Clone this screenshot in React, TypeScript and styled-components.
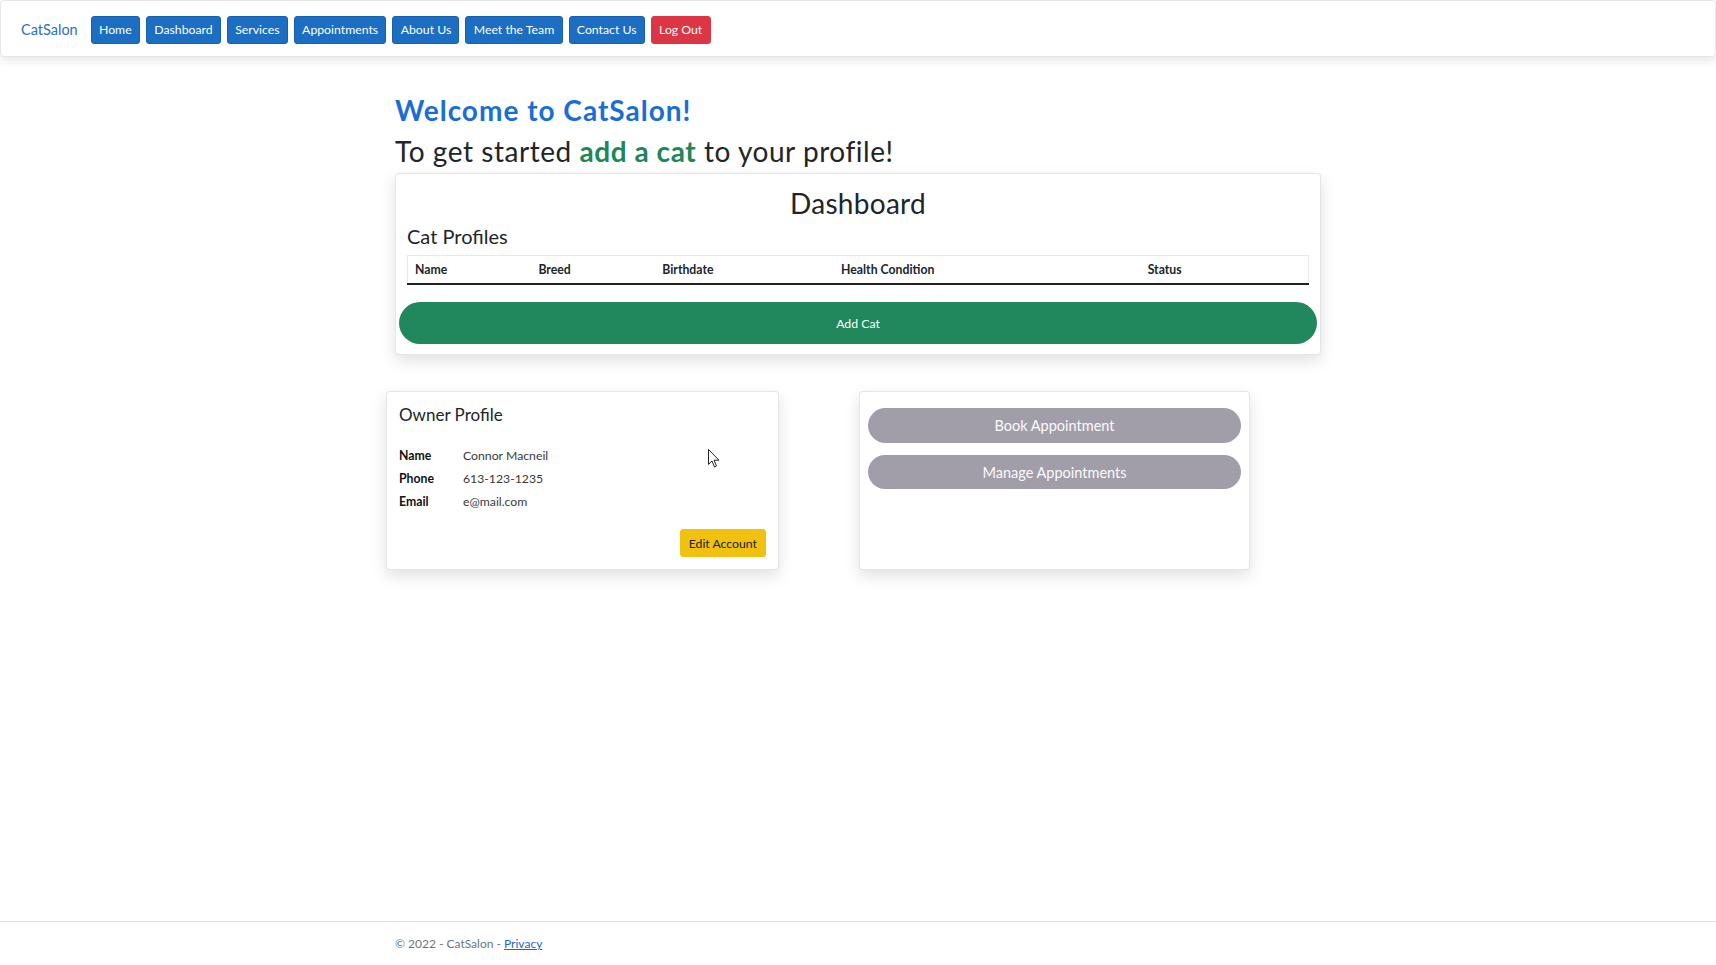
import React from "react";
import styled, { createGlobalStyle } from "styled-components";

const GlobalStyle = createGlobalStyle`
  * { box-sizing: border-box; }
  html, body { margin: 0; padding: 0; }
  body {
    font-family: "Segoe UI", Lato, "Liberation Sans", sans-serif;
    font-size: 14px;
    color: #212529;
    background: #ffffff;
  }
`;

const Page = styled.div`
  min-height: 100vh;
  display: flex;
  flex-direction: column;
`;

const NavBar = styled.nav`
  height: 57px;
  display: flex;
  align-items: center;
  padding: 0 21px 0 20px;
  background: #ffffff;
  border: 1px solid #e4e6e8;
  border-radius: 4px;
  box-shadow: 0 4px 8px rgba(0, 0, 0, 0.09);
`;

const Brand = styled.a`
  color: #2b6fc4;
  font-size: 14.5px;
  text-decoration: none;
  margin-right: 13px;
  margin-top: 2px;
`;

const NavButtons = styled.div`
  display: flex;
  gap: 6px;
  margin-top: 2px;
`;

const NavButton = styled.button<{ $danger?: boolean }>`
  font-family: inherit;
  font-size: 12.25px;
  line-height: 19px;
  padding: 3.5px 7.3px;
  border-radius: 3px;
  color: #ffffff;
  background: ${(p) => (p.$danger ? "#dc3545" : "#1b6ec2")};
  border: 1px solid ${(p) => (p.$danger ? "#dc3545" : "#1861ac")};
  cursor: pointer;
`;

const Main = styled.main`
  flex: 1;
  width: 926px;
  margin: 37px auto 0;
`;

const Heading = styled.h2`
  font-size: 28px;
  line-height: 33.6px;
  font-weight: 400;
  letter-spacing: 0.55px;
  margin: 0 0 7px;
`;

const Welcome = styled(Heading)`
  color: #1a6ed3;
  font-weight: 700;
  letter-spacing: 1px;
`;

const Highlight = styled.span`
  color: #1e8657;
  font-weight: 700;
`;

const Card = styled.section`
  background: #ffffff;
  border: 1px solid rgba(0, 0, 0, 0.1);
  border-radius: 4px;
  box-shadow: 0 6px 16px rgba(0, 0, 0, 0.12);
`;

const DashboardCard = styled(Card)`
  margin-top: -2px;
  padding: 12px 3px 10px;
`;

const CardTitle = styled.h2`
  font-size: 28px;
  line-height: 34px;
  font-weight: 400;
  letter-spacing: 0.3px;
  text-align: center;
  margin: 0;
`;

const ProfilesSection = styled.div`
  padding: 0 8px;
`;

const SubTitle = styled.h4`
  font-size: 20px;
  line-height: 25px;
  font-weight: 400;
  margin: 4px 0 6px;
`;

const Table = styled.table`
  width: 100%;
  border-collapse: collapse;
  font-size: 12.25px;
  border: 1px solid #e6e8ea;
  border-bottom: none;
`;

const HeadCell = styled.th<{ $w: number }>`
  width: ${(p) => p.$w}px;
  text-align: left;
  font-weight: 700;
  line-height: 18px;
  padding: 4.5px 7px;
  border-bottom: 2px solid #222;
`;

const AddCatButton = styled.button`
  display: block;
  width: 100%;
  height: 42px;
  margin-top: 17px;
  border: none;
  border-radius: 21px;
  background: #21875c;
  color: #ffffff;
  font-family: inherit;
  font-size: 12.25px;
  cursor: pointer;
`;

const LowerRow = styled.div`
  display: grid;
  grid-template-columns: 393px 391px;
  column-gap: 80px;
  margin: 36px 0 0 -9px;
`;

const OwnerCard = styled(Card)`
  position: relative;
  height: 179px;
  padding: 12px 12px;
  display: flex;
  flex-direction: column;
`;

const OwnerTitle = styled.h5`
  font-size: 17px;
  line-height: 21px;
  font-weight: 400;
  margin: 0 0 19px;
`;

const InfoGrid = styled.dl`
  display: grid;
  grid-template-columns: 64px 1fr;
  grid-auto-rows: 23px;
  align-items: center;
  margin: 0;
  font-size: 12.25px;
`;

const InfoLabel = styled.dt`
  font-weight: 700;
  color: #111;
`;

const InfoValue = styled.dd`
  margin: 0;
  color: #3a3a3a;
`;

const EditRow = styled.div`
  margin-top: auto;
  display: flex;
  justify-content: flex-end;
`;

const EditButton = styled.button`
  font-family: inherit;
  font-size: 12.25px;
  line-height: 19px;
  padding: 3.5px 8px;
  border-radius: 3px;
  background: #f0c10f;
  border: 1px solid #f0c10f;
  color: #222;
  cursor: pointer;
`;

const ApptCard = styled(Card)`
  height: 179px;
  padding: 16px 8px 12px 8px;
  display: flex;
  flex-direction: column;
  gap: 12px;
`;

const ApptButton = styled.button<{ $h: number }>`
  height: ${(p) => p.$h}px;
  width: 100%;
  border: none;
  border-radius: 18px;
  background: #a19ea9;
  color: #fafafa;
  font-family: inherit;
  font-size: 14.5px;
  cursor: pointer;
`;

const Cursor = styled.svg`
  position: absolute;
  left: 321px;
  top: 57px;
  pointer-events: none;
`;

const Footer = styled.footer`
  border-top: 1px solid #dee2e6;
  height: 44px;
  line-height: 43px;
  font-size: 12px;
  color: #6c757d;
`;

const FooterInner = styled.div`
  width: 926px;
  margin: 0 auto;
`;

const FooterLink = styled.a`
  color: #1b66d2;
  text-decoration: underline;
`;

const navItems = ["Home", "Dashboard", "Services", "Appointments", "About Us", "Meet the Team", "Contact Us"];

const columns: [string, number][] = [
  ["Name", 124],
  ["Breed", 124],
  ["Birthdate", 179],
  ["Health Condition", 307],
  ["Status", 168],
];

export default function App() {
  return (
    <Page>
      <GlobalStyle />
      <NavBar>
        <Brand href="#">CatSalon</Brand>
        <NavButtons>
          {navItems.map((n) => (
            <NavButton key={n}>{n}</NavButton>
          ))}
          <NavButton $danger>Log Out</NavButton>
        </NavButtons>
      </NavBar>
      <Main>
        <Welcome>Welcome to CatSalon!</Welcome>
        <Heading>
          To get started <Highlight>add a cat</Highlight> to your profile!
        </Heading>
        <DashboardCard>
          <CardTitle>Dashboard</CardTitle>
          <ProfilesSection>
            <SubTitle>Cat Profiles</SubTitle>
            <Table>
              <thead>
                <tr>
                  {columns.map(([c, w]) => (
                    <HeadCell key={c} $w={w}>
                      {c}
                    </HeadCell>
                  ))}
                </tr>
              </thead>
            </Table>
          </ProfilesSection>
          <AddCatButton>Add Cat</AddCatButton>
        </DashboardCard>
        <LowerRow>
          <OwnerCard>
            <OwnerTitle>Owner Profile</OwnerTitle>
            <InfoGrid>
              <InfoLabel>Name</InfoLabel>
              <InfoValue>Connor Macneil</InfoValue>
              <InfoLabel>Phone</InfoLabel>
              <InfoValue>613-123-1235</InfoValue>
              <InfoLabel>Email</InfoLabel>
              <InfoValue>e@mail.com</InfoValue>
            </InfoGrid>
            <EditRow>
              <EditButton>Edit Account</EditButton>
            </EditRow>
            <Cursor width="12" height="19" viewBox="0 0 12 19">
              <path d="M0.5 0.5 L0.5 15.5 L4 12 L6.5 18 L8.5 17 L6 11.2 L11 11.2 Z" fill="#fff" stroke="#222" strokeWidth="1" strokeLinejoin="round" />
            </Cursor>
          </OwnerCard>
          <ApptCard>
            <ApptButton $h={35}>Book Appointment</ApptButton>
            <ApptButton $h={34}>Manage Appointments</ApptButton>
          </ApptCard>
        </LowerRow>
      </Main>
      <Footer>
        <FooterInner>
          © 2022 - CatSalon - <FooterLink href="#">Privacy</FooterLink>
        </FooterInner>
      </Footer>
    </Page>
  );
}
